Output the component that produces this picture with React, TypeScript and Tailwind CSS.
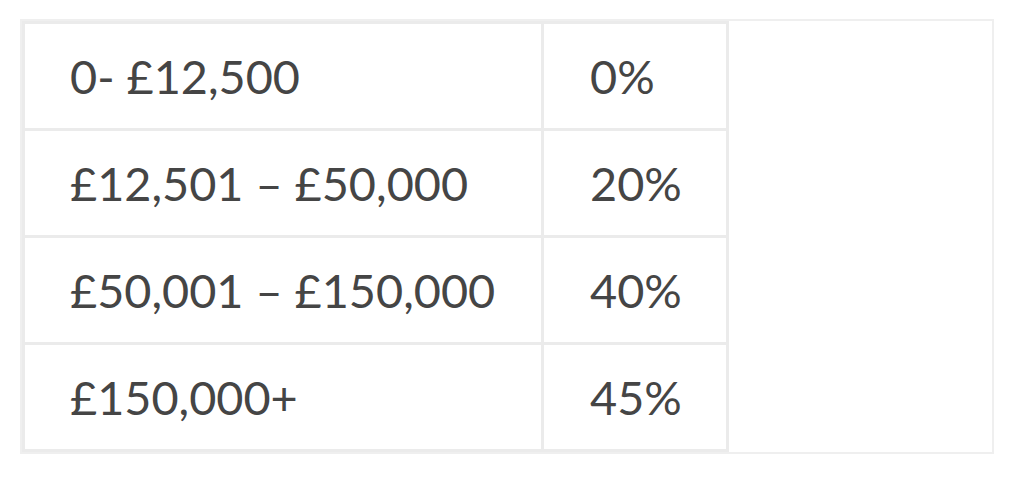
import React from 'react';

const BANDS = [
  { range: '0- £12,500', rate: '0%' },
  { range: '£12,501 – £50,000', rate: '20%' },
  { range: '£50,001 – £150,000', rate: '40%' },
  { range: '£150,000+', rate: '45%' },
];

export default function App() {
  return (
    <div className="w-[1031px] h-[477px] bg-white pl-[20px] pt-[19px] font-['Lato',_'Liberation_Sans',_sans-serif] text-[#454545]">
      {/* Table frame */}
      <div className="w-[974px] h-[435px] border-2 border-[#efefef] flex">
        {/* Tax bands */}
        <div className="w-[707px] h-full bg-[#ebebeb] p-[3px] grid grid-cols-[516px_182px] grid-rows-4 gap-[3px]">
          {BANDS.map((band) => (
            <React.Fragment key={band.range}>
              <div className="bg-white flex items-center pl-[45px] text-[46.8px] leading-none">
                {band.range}
              </div>
              <div className="bg-white flex items-center pl-[46px] text-[46.8px] leading-none">
                {band.rate}
              </div>
            </React.Fragment>
          ))}
        </div>
        {/* Empty column */}
        <div className="flex-1 bg-white" />
      </div>
    </div>
  );
}
